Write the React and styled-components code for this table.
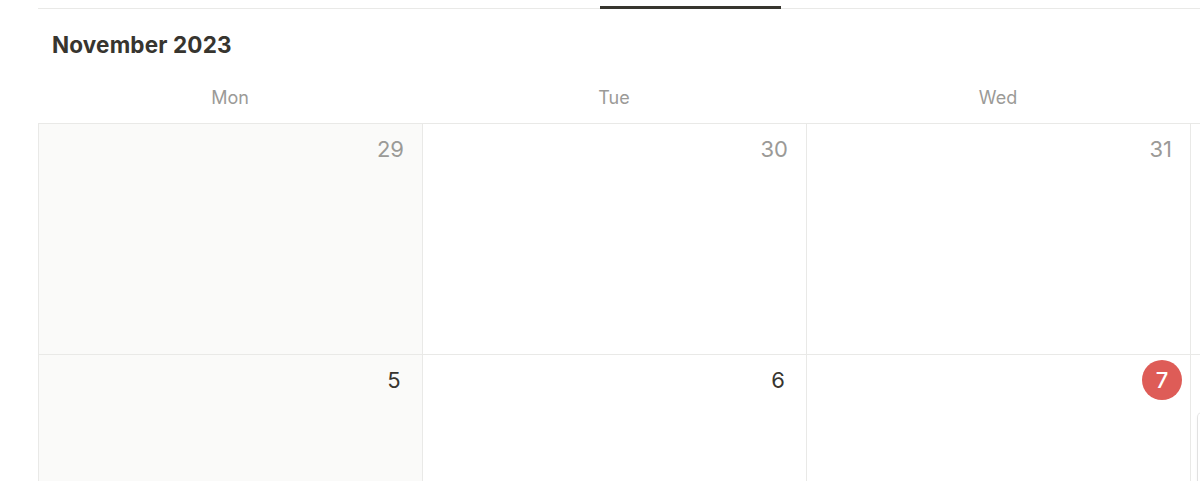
import React from 'react';
import styled, { createGlobalStyle } from 'styled-components';

const WEEKDAYS = ['Mon', 'Tue', 'Wed', 'Thu', 'Fri', 'Sat', 'Sun'];

const WEEKS = [
  [
    { id: 'd29', day: 29, muted: true },
    { id: 'd30', day: 30, muted: true },
    { id: 'd31', day: 31, muted: true },
    { id: 'd1', day: 1 },
    { id: 'd2', day: 2 },
    { id: 'd3', day: 3 },
    { id: 'd4', day: 4 },
  ],
  [
    { id: 'd5', day: 5 },
    { id: 'd6', day: 6 },
    { id: 'd7', day: 7, today: true },
    { id: 'd8', day: 8, card: true },
    { id: 'd9', day: 9 },
    { id: 'd10', day: 10 },
    { id: 'd11', day: 11 },
  ],
];

const GlobalStyle = createGlobalStyle`
  html, body {
    margin: 0;
    padding: 0;
    background: #fff;
    overflow: hidden;
  }
  body {
    font-family: Inter, "Noto Sans", "Liberation Sans", sans-serif;
    color: #37352f;
  }
`;

const App = () => {
  return (
    <>
      <GlobalStyle />
      <Page>
        <TabBar>
          <TabIndicator />
        </TabBar>
        <Title>November 2023</Title>
        <Calendar>
          <WeekHeader>
            {WEEKDAYS.map((name) => (
              <WeekdayName key={name}>{name}</WeekdayName>
            ))}
          </WeekHeader>
          {WEEKS.map((week, i) => (
            <WeekRow key={i}>
              {week.map((cell, col) => (
                <DayCell key={cell.id} shaded={col === 0}>
                  <DayLabel>
                    <DayNumber muted={cell.muted} today={cell.today}>
                      {cell.day}
                    </DayNumber>
                  </DayLabel>
                  {cell.card && <EventCard />}
                </DayCell>
              ))}
            </WeekRow>
          ))}
        </Calendar>
      </Page>
    </>
  );
};

export default App;

const Page = styled.div`
  width: 1200px;
  height: 481px;
  padding-left: 38px;
  box-sizing: border-box;
  overflow: hidden;
`;

const TabBar = styled.div`
  position: relative;
  height: 8px;
  border-bottom: 1px solid #e9e9e7;
`;

const TabIndicator = styled.div`
  position: absolute;
  left: 562px;
  bottom: -1px;
  width: 181px;
  height: 3px;
  background: #37352f;
`;

const Title = styled.h1`
  margin: 0;
  padding: 22px 0 0 14px;
  height: 48px;
  box-sizing: border-box;
  font-size: 22.5px;
  line-height: 28px;
  font-weight: 700;
  color: #37352f;
  letter-spacing: 0.15px;
`;

const Calendar = styled.div`
  width: 2688px;
`;

const WeekHeader = styled.div`
  display: grid;
  grid-template-columns: repeat(7, 384px);
  height: 66px;
  align-items: end;
  padding-bottom: 14px;
  box-sizing: border-box;
`;

const WeekdayName = styled.div`
  text-align: center;
  font-size: 18px;
  line-height: 22px;
  color: #9b9a97;
`;

const WeekRow = styled.div`
  display: grid;
  grid-template-columns: repeat(7, 384px);
  height: 231px;
  border-top: 1px solid #e9e9e7;
  box-sizing: border-box;
`;

const DayCell = styled.div`
  border-left: 1px solid #e9e9e7;
  background: ${(props) => (props.shaded ? '#fafaf9' : '#fff')};
  display: flex;
  flex-direction: column;
`;

const DayLabel = styled.div`
  display: flex;
  justify-content: flex-end;
  padding: 5px 8px 0;
`;

const DayNumber = styled.span`
  display: flex;
  align-items: center;
  justify-content: center;
  min-width: 40px;
  height: 40px;
  padding: 0 10px;
  box-sizing: border-box;
  border-radius: 20px;
  font-size: 22px;
  color: ${(props) =>
    props.today ? '#fff' : props.muted ? '#9b9a97' : '#37352f'};
  background: ${(props) => (props.today ? '#de5c57' : 'transparent')};
  font-weight: ${(props) => (props.today ? 500 : 400)};
`;

const EventCard = styled.div`
  margin: 13px 8px 0 7px;
  height: 72px;
  border-radius: 4px;
  background: #fff;
  box-shadow: rgba(15, 15, 15, 0.1) 0 0 0 1px, rgba(15, 15, 15, 0.06) 0 2px 4px;
`;
